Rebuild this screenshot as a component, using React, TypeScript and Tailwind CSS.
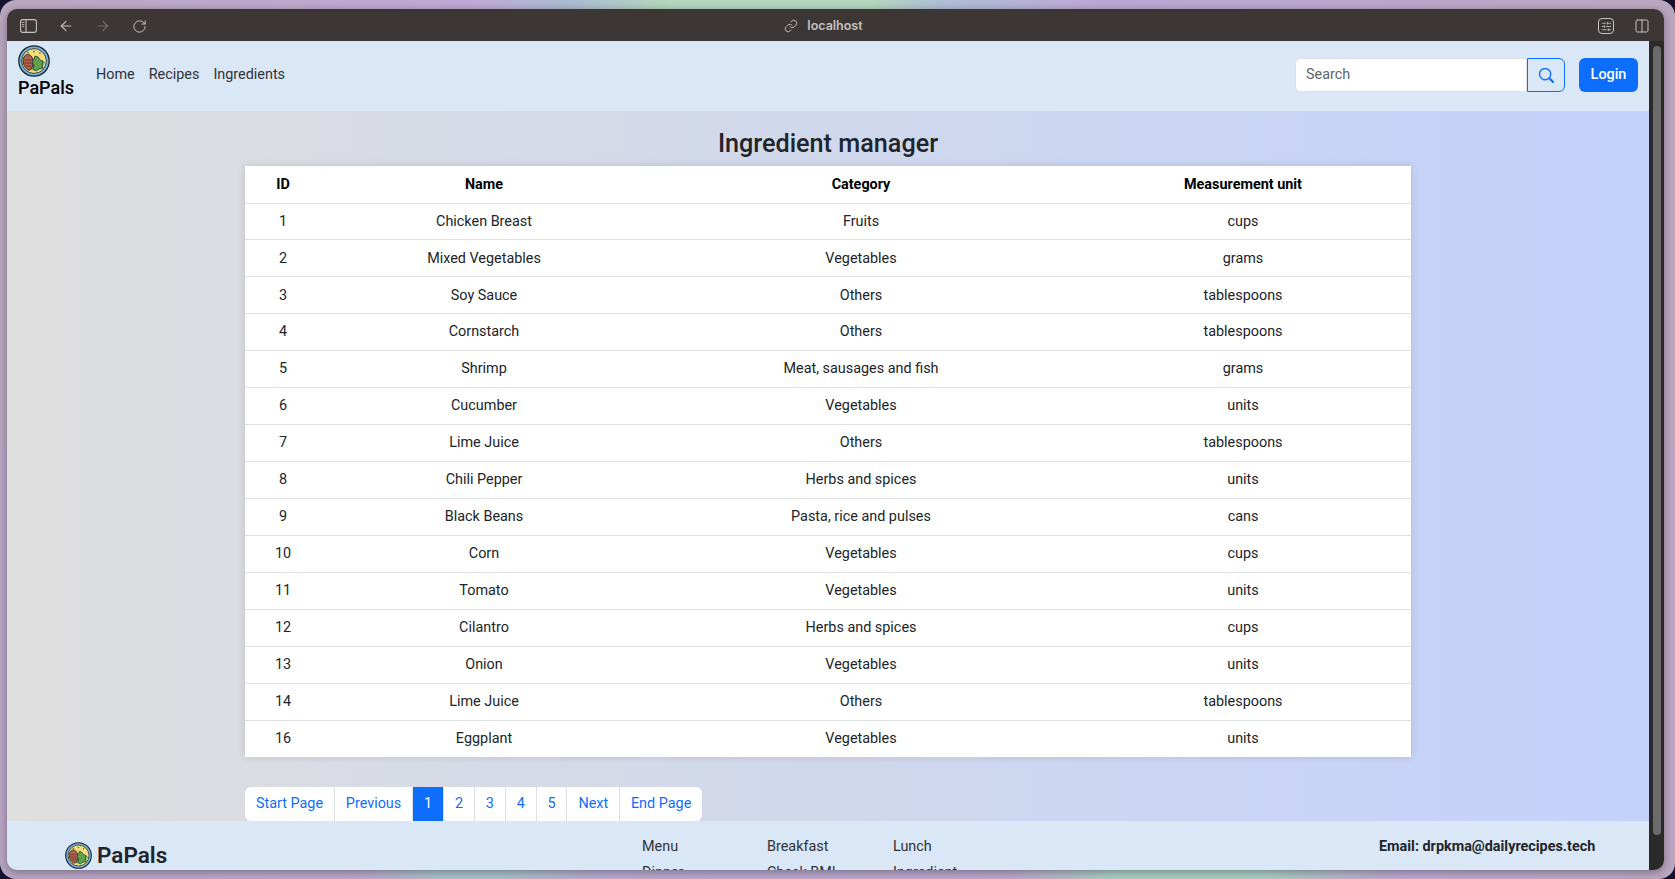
import { ArrowLeft, ArrowRight, RotateCw, Link, Columns2, SlidersHorizontal } from 'lucide-react';
import { BsSearch } from 'react-icons/bs';

const rows = [
  [1, 'Chicken Breast', 'Fruits', 'cups'],
  [2, 'Mixed Vegetables', 'Vegetables', 'grams'],
  [3, 'Soy Sauce', 'Others', 'tablespoons'],
  [4, 'Cornstarch', 'Others', 'tablespoons'],
  [5, 'Shrimp', 'Meat, sausages and fish', 'grams'],
  [6, 'Cucumber', 'Vegetables', 'units'],
  [7, 'Lime Juice', 'Others', 'tablespoons'],
  [8, 'Chili Pepper', 'Herbs and spices', 'units'],
  [9, 'Black Beans', 'Pasta, rice and pulses', 'cans'],
  [10, 'Corn', 'Vegetables', 'cups'],
  [11, 'Tomato', 'Vegetables', 'units'],
  [12, 'Cilantro', 'Herbs and spices', 'cups'],
  [13, 'Onion', 'Vegetables', 'units'],
  [14, 'Lime Juice', 'Others', 'tablespoons'],
  [16, 'Eggplant', 'Vegetables', 'units'],
];

const pages = ['Start Page', 'Previous', '1', '2', '3', '4', '5', 'Next', 'End Page'];

const Logo = ({ className }: { className: string }) => (
  <svg viewBox="0 0 32 32" className={className}>
    <circle cx="16" cy="16" r="15.2" fill="#6fb3dc" stroke="#1c2430" strokeWidth="1.3" />
    <circle cx="16" cy="16" r="12.4" fill="#f4dc7c" stroke="#1c2430" strokeWidth="0.8" />
    <path d="M4.5 17 Q16 13 27.5 17 A12 12 0 0 1 4.5 17Z" fill="#7fb86a" />
    <path d="M11 9.5 C16 12 16.5 19 13 24 C12 25.5 10.5 25.5 9.5 24.5 C5 21 4 15 6 12 C7 10 9 9 11 9.5Z" fill="#b5604c" stroke="#1c2430" strokeWidth="0.9" />
    <path d="M6.5 15h7M6.5 18h7M8 21h5" stroke="#6d3328" strokeWidth="0.9" />
    <path d="M17 11l3 1 2 3 3 1-1 4 1 3-4 1-3 2-3-2 1-4-2-3 2-3z" fill="#5ea24a" stroke="#1c2430" strokeWidth="0.7" />
    <circle cx="10" cy="7.5" r="0.7" fill="#1c2430" />
    <circle cx="16" cy="6.5" r="0.7" fill="#1c2430" />
    <circle cx="22" cy="8" r="0.7" fill="#1c2430" />
  </svg>
);

const SidebarIcon = () => (
  <svg viewBox="0 0 17 14" className="h-[14px] w-[17px]" fill="none" stroke="currentColor">
    <rect x="0.6" y="0.6" width="15.8" height="12.8" rx="2.2" strokeWidth="1.1" />
    <path d="M6 0.6v12.8" strokeWidth="1.1" />
    <path d="M2.2 3.5h2M2.2 5.5h2M2.2 7.5h2" strokeWidth="0.9" />
  </svg>
);

const BrowserBar = () => (
  <div className="flex h-[32px] shrink-0 items-center bg-[#3c3735] pt-[2px] pr-[14px] pl-[13px] text-[#c4c2c1]">
    <SidebarIcon />
    <ArrowLeft className="ml-[21px] h-[16px] w-[16px]" strokeWidth={1.6} />
    <ArrowRight className="ml-[21px] h-[16px] w-[16px] text-[#716d6b]" strokeWidth={1.6} />
    <RotateCw className="ml-[21px] h-[15px] w-[15px]" strokeWidth={1.6} />
    <div className="flex flex-1 items-center justify-center gap-[9px] pr-[98px]">
      <Link className="h-[14px] w-[14px]" strokeWidth={1.6} />
      <span className="font-['Inter',sans-serif] text-[12.5px] font-semibold">localhost</span>
    </div>
    <div className="flex h-[16px] w-[16px] items-center justify-center rounded-[4px] border border-[#c4c2c1]">
      <SlidersHorizontal className="h-[11px] w-[11px]" strokeWidth={1.8} />
    </div>
    <Columns2 className="ml-[20px] h-[16px] w-[16px]" strokeWidth={1.5} />
  </div>
);

const Navbar = () => (
  <nav className="flex h-[70px] shrink-0 items-center bg-[#dae7f7] pr-[11px] pb-[2px] pl-[11px] text-[14.4px]">
    <div className="-mt-[8px] flex w-[55px] flex-col">
      <Logo className="mt-[1px] h-[32px] w-[32px]" />
      <span className="text-[18px] leading-[21px] font-medium text-black">PaPals</span>
    </div>
    <div className="ml-[23px] flex gap-[14px] text-[#2f3338]">
      <span>Home</span>
      <span>Recipes</span>
      <span>Ingredients</span>
    </div>
    <div className="ml-auto flex items-center">
      <div className="flex h-[34px] w-[232px] items-center rounded-l-[6px] border border-[#dee2e6] bg-white px-[10px] text-[#60666c]">Search</div>
      <button className="flex h-[34px] w-[38px] items-center justify-center rounded-r-[6px] border border-[#0d6efd] text-[#0d6efd]">
        <BsSearch className="h-[15px] w-[15px] stroke-[0.5px]" />
      </button>
      <button className="ml-[14px] h-[34px] w-[59px] rounded-[6px] bg-[#0d6efd] font-medium text-white">Login</button>
    </div>
  </nav>
);

const IngredientTable = () => (
  <table className="w-[1166px] table-fixed border-collapse bg-white text-center text-[14.4px] text-[#212529] shadow-[0_0_8px_rgba(0,0,0,0.12)]">
    <thead>
      <tr className="h-[37px] border-b border-[#dee2e6] text-black">
        <th className="w-[76px] pt-[1px] font-bold">ID</th>
        <th className="w-[326px] pt-[1px] font-bold">Name</th>
        <th className="w-[428px] pt-[1px] font-bold">Category</th>
        <th className="w-[336px] pt-[1px] font-bold">Measurement unit</th>
      </tr>
    </thead>
    <tbody>
      {rows.map((row, i) => (
        <tr key={i} className="h-[36.95px] border-b border-[#dee2e6] last:border-b-0">
          {row.map((cell, j) => (
            <td key={j}>{cell}</td>
          ))}
        </tr>
      ))}
    </tbody>
  </table>
);

const Pagination = () => (
  <div className="flex h-[34px] self-start rounded-[6px] bg-white text-[14.4px] text-[#0d6efd]">
    {pages.map((page, i) => (
      <span
        key={page}
        className={`flex items-center justify-center px-[10.9px] ${i > 0 ? 'border-l border-[#dee2e6]' : ''} ${page === '1' ? 'bg-[#0d6efd] text-white' : ''} ${i === 0 ? 'rounded-l-[6px]' : ''} ${i === pages.length - 1 ? 'rounded-r-[6px]' : ''}`}
      >
        {page}
      </span>
    ))}
  </div>
);

const Footer = () => (
  <footer className="flex h-[80px] shrink-0 bg-[#dae7f7] pt-[16px] text-[14.4px] text-[#2f3338]">
    <div className="ml-[58px] flex h-[24px] w-[577px] items-center gap-[5px] pt-[12px]">
      <Logo className="h-[27px] w-[27px]" />
      <span className="text-[22.5px] leading-none font-semibold text-[#212529]">PaPals</span>
    </div>
    <div className="grid h-[48px] w-[376px] shrink-0 grid-cols-[125px_126px_125px] gap-y-[3px] leading-[20px]">
      <span>Menu</span>
      <span>Breakfast</span>
      <span>Lunch</span>
      <span>Dinner</span>
      <span>Check BMI</span>
      <span>Ingredient</span>
    </div>
    <span className="ml-[361px] leading-[20px] font-bold whitespace-nowrap text-[#212529]">Email: drpkma@dailyrecipes.tech</span>
  </footer>
);

export default function App() {
  return (
    <div className="h-[879px] w-full overflow-hidden bg-[#14112c]">
      <div className="h-full overflow-hidden rounded-[16px] bg-no-repeat pt-[9px] pl-[7px] font-['Roboto',sans-serif] [background-image:linear-gradient(90deg,#b9a7bf_0%,#c0a9d6_28%,#aabbd0_34%,#b5d6bf_40%,#b5d6bf_52%,#aebfd4_56%,#bca8d6_65%,#bba6c0_100%),linear-gradient(90deg,#b8a5c5_0%,#bba6cc_21%,#a9c0cc_26%,#a9c0cc_30%,#b8a9cf_36%,#bba6cc_60%,#a9cfc4_67%,#a9cfc4_75%,#bca8d0_83%,#b9a6c2_100%)] [background-position:top,bottom] [background-size:100%_51%]">
        <div className="flex h-[861px] w-[1657px] flex-col overflow-hidden rounded-[10px] shadow-[0_2px_8px_rgba(0,0,0,0.35)]">
          <BrowserBar />
          <div className="flex min-h-0 flex-1">
            <div className="flex min-w-0 flex-1 flex-col overflow-hidden">
              <Navbar />
              <main className="flex h-[710px] shrink-0 flex-col items-center bg-[linear-gradient(90deg,#dedede_0%,#c3d2fb_100%)]">
                <h2 className="mt-[17px] mb-[7px] text-[25.2px] leading-[31px] font-medium text-[#212529]">Ingredient manager</h2>
                <IngredientTable />
                <div className="mt-[30px] flex w-[1166px]">
                  <Pagination />
                </div>
              </main>
              <Footer />
            </div>
            <div className="w-[15px] shrink-0 bg-[#2b2a2a] pt-[5px] pl-[4px]">
              <div className="h-[789px] w-[8px] rounded-full bg-[#6b6b6b]" />
            </div>
          </div>
        </div>
      </div>
    </div>
  );
}
